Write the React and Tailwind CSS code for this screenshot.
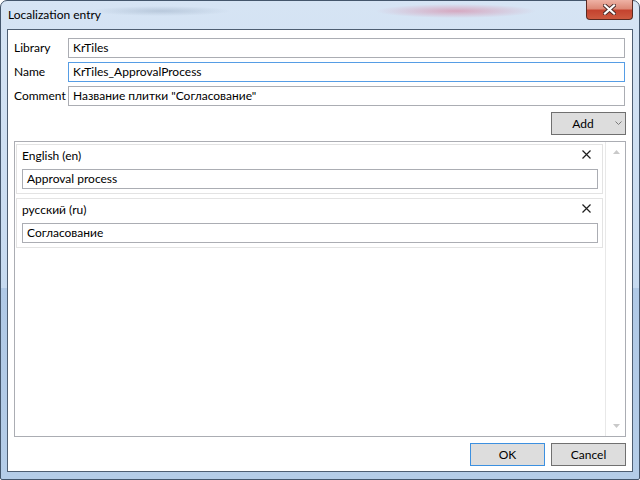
const font = "font-['Lato',sans-serif]";

const TextBox = ({ value, focused }) => (
  <div
    className={`h-[20px] flex-1 border ${
      focused ? "border-[#569de5]" : "border-[#abadb3]"
    } bg-white pl-[4px] flex items-center text-[12px] leading-[16px] text-black whitespace-nowrap overflow-hidden`}
  >
    {value}
  </div>
);

const Field = ({ label, value, focused }) => (
  <div className="flex items-center h-[20px] pr-[1px]">
    <div className="w-[54px] shrink-0 text-[12px] leading-[16px] text-black whitespace-nowrap">{label}</div>
    <TextBox value={value} focused={focused} />
  </div>
);

const Button = ({ children, primary, className = "" }) => (
  <div
    className={`h-[23px] w-[75px] border ${
      primary ? "border-[#3c90e0]" : "border-[#707070]"
    } bg-[#dddddd] flex items-center justify-center text-[12px] leading-[16px] text-black ${className}`}
  >
    {children}
  </div>
);

const CloseGlyph = () => (
  <svg width="9" height="9" viewBox="0 0 9 9" className="mt-[2px] mr-[7px]">
    <path d="M0.5 0.5 L8.5 8.5 M8.5 0.5 L0.5 8.5" stroke="#1e1e1e" strokeWidth="1.2" />
  </svg>
);

const LocaleItem = ({ label, value }) => (
  <div className="border border-[#e3e3e3] h-[50px] pl-[5px] pr-[4px] pt-[3px] flex flex-col">
    <div className="flex justify-between items-start h-[16px]">
      <span className="text-[12px] leading-[16px] text-black">{label}</span>
      <CloseGlyph />
    </div>
    <div className="mt-[5px] flex">
      <TextBox value={value} />
    </div>
  </div>
);

const App = () => {
  return (
    <div
      className={`${font} w-[640px] h-[480px] border border-[#44566c] rounded-t-[7px] rounded-b-[2px] flex flex-col px-[6px] pb-[7px] bg-[radial-gradient(ellipse_80px_7px_at_455px_10px,rgba(214,96,130,0.45),transparent),radial-gradient(ellipse_70px_5px_at_160px_10px,rgba(130,150,175,0.35),transparent),linear-gradient(180deg,#d6e4f4_0%,#c6daf0_60%,#b0c9e6_6%,#b5cde8_100%)]`}
    >
      {/* Title bar */}
      <div className="h-[28px] flex justify-between items-start">
        <div className="pt-[6px] pl-[1px] text-[12px] leading-[16px] text-black">
          Localization entry
        </div>
        <div className="-mt-[1px] w-[47px] h-[20px] border border-[#5a2a22] border-t-0 rounded-b-[4px] bg-[linear-gradient(180deg,#eeb2a5_0%,#dd8a78_45%,#c4432f_55%,#cd5a40_100%)] flex items-center justify-center">
          <svg width="13" height="11" viewBox="0 0 13 11">
            <path d="M2 1.5 L11 9.5 M11 1.5 L2 9.5" stroke="#4a2a28" strokeWidth="4" strokeLinecap="square" />
            <path d="M2 1.5 L11 9.5 M11 1.5 L2 9.5" stroke="#ffffff" strokeWidth="2.2" strokeLinecap="square" />
          </svg>
        </div>
      </div>

      {/* Client area */}
      <div className="h-[443px] border border-[#4e5e72] bg-white flex flex-col pt-[8px] pl-[6px] pr-[6px] pb-[5px]">
        <div className="flex flex-col gap-[4px]">
          <Field label="Library" value="KrTiles" />
          <Field label="Name" value="KrTiles_ApprovalProcess" focused />
          <Field label="Comment" value={'Название плитки "Согласование"'} />
        </div>

        <div className="flex justify-end mt-[6px]">
          <div className="h-[23px] w-[75px] border border-[#707070] bg-[#dddddd] flex items-center text-[12px] leading-[16px] text-black">
            <span className="w-[62px] text-center">Add</span>
            <svg width="7" height="5" viewBox="0 0 7 5" className="ml-[1px]">
              <path d="M0.5 0.5 L3.5 3.5 L6.5 0.5" stroke="#7a7a7a" fill="none" strokeWidth="1" />
            </svg>
          </div>
        </div>

        {/* List */}
        <div className="mt-[6px] flex-1 border border-[#abadb3] flex">
          <div className="flex-1 pl-[1px] pr-[2px] pt-[2px] flex flex-col gap-[4px]">
            <LocaleItem label="English (en)" value="Approval process" />
            <LocaleItem label="русский (ru)" value="Согласование" />
          </div>
          <div className="w-[20px] border-l border-[#e8e8e8] flex flex-col items-center justify-between pt-[8px] pb-[8px] pl-[2px]">
            <svg width="7" height="4" viewBox="0 0 7 4">
              <path d="M0 4 L3.5 0 L7 4 Z" fill="#c9c9c9" />
            </svg>
            <svg width="7" height="4" viewBox="0 0 7 4">
              <path d="M0 0 L3.5 4 L7 0 Z" fill="#c9c9c9" />
            </svg>
          </div>
        </div>

        <div className="flex justify-end gap-[6px] mt-[6px]">
          <Button primary>OK</Button>
          <Button>Cancel</Button>
        </div>
      </div>
    </div>
  );
};

export default App;
